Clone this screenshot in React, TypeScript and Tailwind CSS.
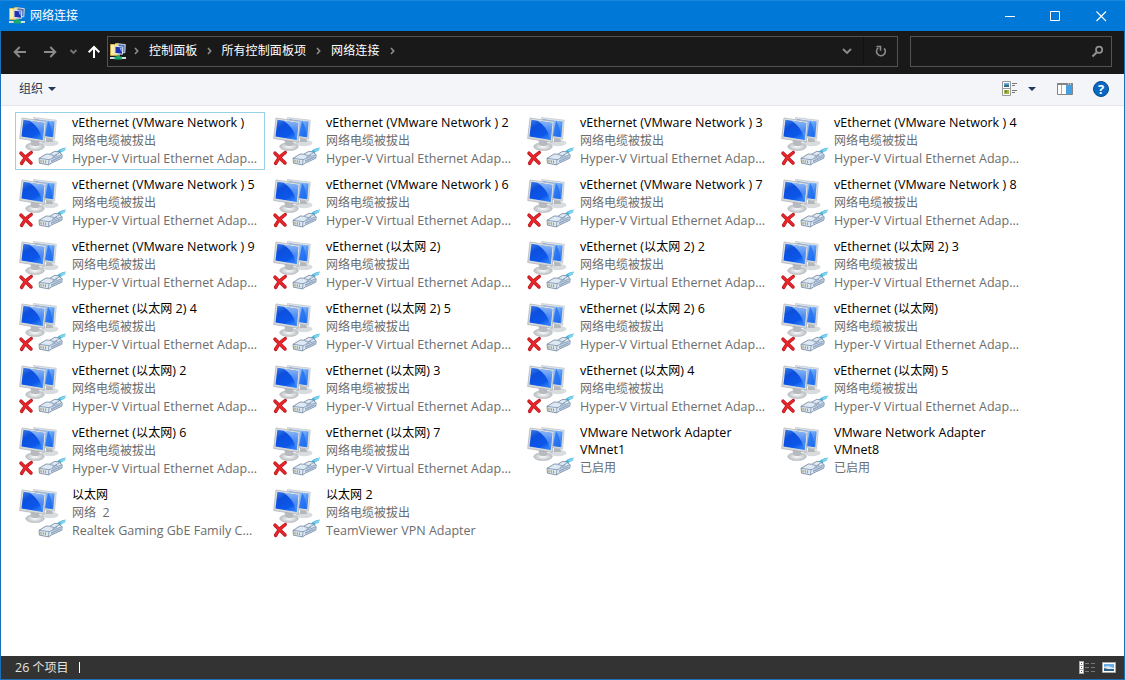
import React from "react";

type Adapter = { name: string; status: string; device?: string; unplugged?: boolean };

const HYPERV = "Hyper-V Virtual Ethernet Adap...";
const CUT = "网络电缆被拔出";

const hyperV = (name: string): Adapter => ({ name, status: CUT, device: HYPERV, unplugged: true });

const adapters: Adapter[] = [
  hyperV("vEthernet (VMware Network )"),
  ...[2, 3, 4, 5, 6, 7, 8, 9].map((n) => hyperV(`vEthernet (VMware Network ) ${n}`)),
  hyperV("vEthernet (以太网 2)"),
  ...[2, 3, 4, 5, 6].map((n) => hyperV(`vEthernet (以太网 2) ${n}`)),
  hyperV("vEthernet (以太网)"),
  ...[2, 3, 4, 5, 6, 7].map((n) => hyperV(`vEthernet (以太网) ${n}`)),
  { name: "VMware Network Adapter VMnet1", status: "已启用" },
  { name: "VMware Network Adapter VMnet8", status: "已启用" },
  { name: "以太网", status: "网络  2", device: "Realtek Gaming GbE Family C..." },
  { name: "以太网 2", status: CUT, device: "TeamViewer VPN Adapter", unplugged: true },
];

/* Latin runs are set slightly larger than the Chinese ones. */
function Mixed({ text }: { text: string }) {
  const runs = text.split(/([\u4e00-\u9fff]+)/).filter(Boolean);
  return (
    <>
      {runs.map((r, i) =>
        /[\u4e00-\u9fff]/.test(r) ? (
          <span key={i}>{r}</span>
        ) : (
          <span key={i} className="text-[12.5px]">{r}</span>
        ),
      )}
    </>
  );
}

function Gradients() {
  return (
    <svg width="0" height="0" className="absolute">
      <defs>
        <linearGradient id="screen" x1="0" y1="0" x2="0.6" y2="1">
          <stop offset="0" stopColor="#3f80ea" />
          <stop offset="0.35" stopColor="#0d4fdd" />
          <stop offset="0.8" stopColor="#0b57ea" />
          <stop offset="1" stopColor="#2c7af6" />
        </linearGradient>
        <linearGradient id="shine" x1="0" y1="0" x2="0" y2="1">
          <stop offset="0" stopColor="#b9dcff" stopOpacity="0.75" />
          <stop offset="1" stopColor="#5da2ff" stopOpacity="0.3" />
        </linearGradient>
        <linearGradient id="rear" x1="0" y1="0" x2="1" y2="0.6">
          <stop offset="0" stopColor="#4d8ceb" />
          <stop offset="0.5" stopColor="#8fc0fa" />
          <stop offset="1" stopColor="#2f7df2" />
        </linearGradient>
        <linearGradient id="frame" x1="0" y1="0" x2="0" y2="1">
          <stop offset="0" stopColor="#e2e5e8" />
          <stop offset="1" stopColor="#d4d7da" />
        </linearGradient>
        <radialGradient id="foot">
          <stop offset="0" stopColor="#ffffff" />
          <stop offset="1" stopColor="#b9bdc1" />
        </radialGradient>
      </defs>
    </svg>
  );
}

function AdapterIcon({ unplugged }: { unplugged?: boolean }) {
  return (
    <svg width="55" height="56" viewBox="1 1 55 56" className="shrink-0">
      <ellipse cx="35" cy="31" rx="8.5" ry="3.2" fill="#d9dcde" />
      <path d="M31 25h6l1 5h-7z" fill="#b4b8bc" />
      <path d="M18.500 5.500L41.300 8.200 39.600 27.200 19 24z" fill="url(#frame)" stroke="#b9bdc1" strokeWidth=".6" />
      <path d="M20 7.200L39.600 9.500 38.200 25.300 20 22.500z" fill="url(#rear)" />
      <path d="M33 8.700C36 12.500 37.300 18 37.300 25.100L30 24z" fill="#1c6af0" opacity=".75" />
      <ellipse cx="20" cy="34.600" rx="9.400" ry="4" fill="url(#foot)" stroke="#b9bdc1" strokeWidth=".5" />
      <path d="M15.500 27.500h8l1.200 5.500c-2.200 1.500-6.500 1.500-8.500 0z" fill="#b7bbbf" />
      <path d="M7 6L31 9.600 29.200 30.300 4.700 26.500z" fill="url(#frame)" stroke="#a9adb1" strokeWidth=".7" />
      <path d="M8.400 7.800L29.300 10.900 27.800 28 6.500 24.600z" fill="url(#screen)" />
      <path d="M14 8.600L29.300 10.900 27.800 28 27 27.900C26 20 21.500 13 14 8.600z" fill="url(#shine)" />
      <path d="M41.500 41c1-3 4.200-4.500 9.200-5.500l-1 3.200c-2 .4-4 1.400-5.400 4z" fill="#48b6dc" />
      <path d="M45 38l5.700-2.500-1 3.200-3.700 1z" fill="#83d3ec" />
      <path d="M24 46.300L31.200 42l3.600.2 5-2.900 4 .7 3.400 2.800-.4 3.400L36.500 51l-3 1.900-9-1.700z" fill="#dfe9f4" stroke="#6c8199" strokeWidth=".8" />
      <path d="M24 46.300l10 1.400 13-5M34 47.700l-.5 5M35 42.500l4.500 1.200 5-3M37 45.500l5-2.500" fill="none" stroke="#7a90ab" strokeWidth=".8" />
      <path d="M36 48.300l9.600-4.200.2 1.600-9.800 4.500z" fill="#93acc9" />
      <path d="M26 47.800v2.600M28.300 48.200v2.600M30.500 48.500v2.800" stroke="#a3a46c" strokeWidth="1.200" />
      {unplugged && (
        <>
          <path d="M6 41.200l10 9.800M16.200 40.600c-4.300 2.900-7.300 6.300-9.600 10.800" stroke="#b5181e" strokeWidth="3.500" strokeLinecap="round" fill="none" />
          <path d="M6.100 41.300l9.800 9.500M16 40.800c-4.300 2.900-7.100 6.100-9.300 10.400" stroke="#e8262b" strokeWidth="2.200" strokeLinecap="round" fill="none" />
        </>
      )}
    </svg>
  );
}

function FolderIcon() {
  return (
    <svg width="16" height="17" viewBox="0 0 16 17" className="shrink-0">
      <path d="M.5 1.500h4l1-1h3v12h-8z" fill="#f6dc7c" stroke="#d5b24b" strokeWidth=".8" />
      <path d="M1 1.800h3v10H1z" fill="#fff0a9" />
      <path d="M8 .8l7.300.8-.5 8.200L8 9z" fill="#5673b5" stroke="#cfd6dd" />
      <path d="M5 3.200l7.800.9-.4 7.200L5 10.400z" fill="#1c31b4" stroke="#dfe5ea" />
      <path d="M9.500 4.700l2.300.3-.3 4.300z" fill="#91b8fa" />
      <path d="M7 11.200h3v1.300H7z" fill="#c8cdd1" />
      <path d="M0 14h16v2H0z" fill="#d5dde0" />
      <path d="M4.500 13.500h2.300v-1.300h3v1.300h2v3H4.500z" fill="#18ad6e" />
    </svg>
  );
}

function Crumb({ className = "" }: { className?: string }) {
  return (
    <svg width="5" height="8" viewBox="0 0 5 8" className={`shrink-0 ${className}`}>
      <path d="M1 1l2.700 3L1 7" fill="none" stroke="#8d8d8d" strokeWidth="1.600" />
    </svg>
  );
}

function TitleBar() {
  return (
    <header className="flex h-[31px] shrink-0 items-center border-t border-[#1a86dc] bg-[#0078d7] pb-px pl-[9px] text-white">
      <FolderIcon />
      <span className="ml-[5px] text-[12px] leading-4">网络连接</span>
      <svg width="104" height="12" viewBox="0 0 104 12" className="mr-[17px] ml-auto" fill="none" stroke="#fff">
        <path d="M1 6.500h10" />
        <path d="M46.500 1.500h9v9h-9z" />
        <path d="M92.500 1.500l9.500 9.500M102 1.500l-9.500 9.500" strokeWidth="1.100" />
      </svg>
    </header>
  );
}

function NavBar() {
  return (
    <nav className="flex h-[43px] shrink-0 items-start bg-[#191919] pt-[5px]">
      <svg width="106" height="31" viewBox="1 0 106 31" fill="none" className="shrink-0">
        <path d="M26 16H15M19.700 11L14.700 16l5 5" stroke="#8b8b8b" strokeWidth="1.900" />
        <path d="M44 16h11M50.300 11l5 5-5 5" stroke="#8b8b8b" strokeWidth="1.900" />
        <path d="M70.500 14l3 3 3-3" stroke="#777" strokeWidth="1.800" />
        <path d="M94 22V11M88.700 16.300L94 11l5.300 5.300" stroke="#fff" strokeWidth="2" />
      </svg>
      <div className="flex h-[31px] w-[791px] shrink-0 items-center border border-[#535353] pb-px pl-[2px] text-[12px] leading-4 text-white">
        <FolderIcon />
        <Crumb className="ml-2" />
        <span className="ml-[10px] tracking-[0.1px]">控制面板</span>
        <Crumb className="ml-[10px]" />
        <span className="ml-[9px] tracking-[0.1px]">所有控制面板项</span>
        <Crumb className="ml-[10px]" />
        <span className="ml-[10px] tracking-[0.1px]">网络连接</span>
        <Crumb className="ml-[10px]" />
        <svg width="10" height="7" viewBox="0 0 10 7" className="ml-auto">
          <path d="M1 1l4 4 4-4" fill="none" stroke="#8b8b8b" strokeWidth="1.900" />
        </svg>
        <div className="ml-[11px] flex h-full w-[34px] items-center justify-center border-l border-[#111]">
          <svg width="12" height="12" viewBox="0 0 12 12" fill="none" stroke="#8b8b8b" strokeWidth="1.600">
            <path d="M3.300 2.800a4.400 4.400 0 1 0 5.900.6" />
            <path d="M1.500 1.500h4v4.300" />
          </svg>
        </div>
      </div>
      <div className="ml-3 flex h-[31px] w-[202px] items-center justify-end border border-[#535353] pr-[7px]">
        <svg width="13" height="13" viewBox="0 0 13 13" fill="none" stroke="#929292">
          <circle cx="8.100" cy="4.800" r="3.100" strokeWidth="1.700" />
          <path d="M5.800 7.200L1.500 11.500" strokeWidth="2" />
        </svg>
      </div>
    </nav>
  );
}

function Toolbar() {
  return (
    <div className="flex h-8 shrink-0 items-center border-b border-[#e3e6ea] bg-[#f4f5f8] pb-[2px] pl-[18px] text-[12px] leading-4 text-[#1e395b]">
      <span className="pt-px">组织</span>
      <svg width="8" height="4" viewBox="0 0 8 4" className="ml-[5px]"><path d="M0 0h8L4 4z" fill="#1e395b" /></svg>
      <svg width="16" height="15" viewBox="0 0 16 15" className="ml-auto">
        <path d="M.5.500h8v14h-8zM.5 7.500h8" fill="#fff" stroke="#999" />
        <path d="M2 2h5v4H2z" fill="#6faada" /><path d="M2 4.500l2-1 3 .5v2H2z" fill="#326b86" />
        <path d="M2 9h5v4H2z" fill="#a6b64e" /><path d="M3 9.500h2v2H3z" fill="#667d2a" />
        <path d="M10 2.500h5M10 4.500h3M10 9.500h5M10 11.500h3" stroke="#777" />
      </svg>
      <svg width="8" height="4" viewBox="0 0 8 4" className="ml-[10px]"><path d="M0 0h8L4 4z" fill="#1e395b" /></svg>
      <svg width="16" height="12" viewBox="0 0 16 12" className="ml-[21px]">
        <path d="M.5.500h15v11H.5z" fill="#fff" stroke="#858585" />
        <path d="M0 0h16v2H0z" fill="#858585" /><path d="M4.500 2v9" stroke="#aaa" />
        <path d="M9 2h6v9H9z" fill="#469fe2" /><path d="M11 1h1M13 1h1" stroke="#fff" />
      </svg>
      <div className="mr-[15px] ml-5 flex size-4 items-center justify-center rounded-full border border-[#064b8c] bg-[#0868c4] font-['Open_Sans',sans-serif] text-[13px] leading-4 font-bold text-white">?</div>
    </div>
  );
}

function AdapterItem({ adapter, focused }: { adapter: Adapter; focused: boolean }) {
  return (
    <div className={`flex h-[58px] overflow-hidden border ${focused ? "border-[#99d1e8]" : "border-transparent"}`}>
      <AdapterIcon unplugged={adapter.unplugged} />
      <div className="ml-px min-w-0 flex-1 pt-px text-[12px] whitespace-pre text-[#6d6d6d]">
        <div className="mb-px leading-[17px] tracking-[0.05px] whitespace-pre-wrap text-black"><Mixed text={adapter.name} /></div>
        <div className="leading-[18px]"><Mixed text={adapter.status} /></div>
        {adapter.device && <div className="leading-[18px] tracking-[0.01px]"><Mixed text={adapter.device} /></div>}
      </div>
    </div>
  );
}

function StatusBar() {
  return (
    <footer className="flex h-[23px] shrink-0 items-center bg-[#333] pl-[14px] text-[12px] leading-4 text-[#e4e4e4]">
      <span className="whitespace-pre"><Mixed text="26 个项目" /></span>
      <span className="ml-[10px] h-[11px] w-px bg-white" />
      <svg width="16" height="13" viewBox="0 0 16 13" className="mr-[7px] ml-auto">
        <path d="M0 0h5v13H0z" fill="#aaa" />
        <path d="M1 1h3v3H1zM1 5h3v3H1zM1 9h3v3H1z" fill="#fff" />
        <path d="M2 2.500h1M2 6.500h1M2 10.500h1" stroke="#555" />
        <path d="M6 2.500h4M12 2.500h4M6 6.500h4M12 6.500h4M6 10.500h4M12 10.500h4" stroke="#777" />
      </svg>
      <svg width="14" height="11" viewBox="0 0 14 11" className="mr-2">
        <path d="M.5.500h13v10H.5z" fill="#fff" stroke="#aaa" />
        <path d="M2 2h10v7H2z" fill="#6aaee6" /><path d="M2 5l4-1 6 2v1H2z" fill="#dbe9f2" /><path d="M2 6l4 1h6v2H2z" fill="#315f83" />
      </svg>
    </footer>
  );
}

export default function App() {
  return (
    <div className="flex h-[680px] w-[1125px] flex-col overflow-hidden bg-[#0f64ad] font-['Open_Sans','Noto_Sans_CJK_SC',sans-serif]">
      <Gradients />
      <TitleBar />
      <div className="flex min-h-0 flex-1 flex-col border-x border-b border-[#1d70b7]">
        <NavBar />
        <Toolbar />
        <main className="flex-1 bg-white pt-[6px] pl-[14px]">
          <div className="grid w-[1012px] grid-cols-4 gap-1">
            {adapters.map((a, i) => <AdapterItem key={a.name} adapter={a} focused={i === 0} />)}
          </div>
        </main>
        <StatusBar />
      </div>
    </div>
  );
}
